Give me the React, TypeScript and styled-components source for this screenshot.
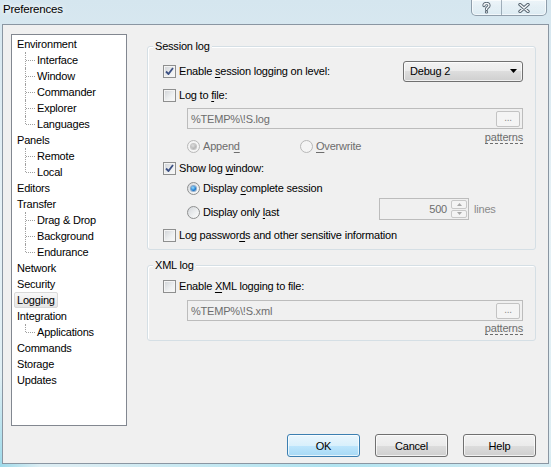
import React from 'react';
import styled, {createGlobalStyle, css} from 'styled-components';

const uiFont = "'Liberation Sans', Arial, sans-serif";

const GlobalStyle = createGlobalStyle`
  html, body {
    margin: 0;
    padding: 0;
  }
  body {
    width: 551px;
    height: 467px;
    overflow: hidden;
    font-family: ${uiFont};
    font-size: 11px;
    letter-spacing: -0.2px;
    color: #000;
  }
  u {
    text-decoration-thickness: 1px;
    text-underline-offset: 2px;
  }
`;

const Window = styled.div`
  width: 551px;
  height: 467px;
  display: flex;
  flex-direction: column;
  background:
    radial-gradient(ellipse 40px 90px at 0% 100%, #9edaea 0%, rgba(158, 218, 234, 0) 100%),
    radial-gradient(ellipse 260px 30px at 60% 100%, rgba(170, 226, 240, 0.9) 0%, rgba(170, 226, 240, 0) 100%),
    linear-gradient(180deg, #d5e6ef 0%, #e6f1f6 45%, #dcedf3 100%);
`;

const TitleBar = styled.div`
  height: 24px;
  flex: 0 0 24px;
  display: flex;
  justify-content: space-between;
  align-items: flex-start;
  padding-left: 3px;
  box-sizing: border-box;
`;

const Title = styled.div`
  line-height: 19px;
  font-size: 11.5px;
  text-shadow: 0 0 5px #fff, 0 0 8px #fff;
`;

const CaptionButtons = styled.div`
  display: flex;
  margin-right: 4px;
  height: 15px;
  border: 1px solid rgba(70, 90, 110, 0.55);
  border-top: none;
  border-radius: 0 0 5px 5px;
  overflow: hidden;
  background: linear-gradient(180deg, rgba(255, 255, 255, 0.55), rgba(225, 238, 245, 0.6));
  box-shadow: inset 0 0 0 1px rgba(255, 255, 255, 0.6);
`;

const CaptionButton = styled.div<{$width: number}>`
  width: ${(p) => p.$width}px;
  display: flex;
  align-items: center;
  justify-content: center;
  & + & {
    border-left: 1px solid rgba(70, 90, 110, 0.45);
  }
`;

const Panel = styled.div`
  margin-left: 2px;
  width: 547px;
  height: 440px;
  box-sizing: border-box;
  border: 1px solid #8a96a2;
  background: #f0f0f0;
  padding: 9px 12px 6px 8px;
  display: flex;
  flex-direction: column;
`;

const Body = styled.div`
  display: flex;
  height: 392px;
`;

const Tree = styled.div`
  width: 116px;
  height: 392px;
  box-sizing: border-box;
  border: 1px solid #828790;
  background: #fff;
  padding-top: 1px;
`;

const TreeRow = styled.div<{$child?: boolean; $last?: boolean}>`
  position: relative;
  height: 16px;
  display: flex;
  align-items: center;
  padding-left: ${(p) => (p.$child ? 20 : 0)}px;
  ${(p) =>
    p.$child &&
    css`
      &::before {
        content: '';
        position: absolute;
        left: 13px;
        top: 0;
        height: ${p.$last ? 8 : 16}px;
        border-left: 1px dotted #a0a0a0;
      }
      &::after {
        content: '';
        position: absolute;
        left: 14px;
        top: 8px;
        width: 9px;
        border-top: 1px dotted #a0a0a0;
      }
    `}
`;

const TreeLabel = styled.span<{$selected?: boolean}>`
  margin-left: 2px;
  padding: 0 2px;
  height: 16px;
  line-height: 14px;
  box-sizing: border-box;
  border: 1px solid transparent;
  border-radius: 2px;
  white-space: nowrap;
  ${(p) =>
    p.$selected &&
    css`
      background: linear-gradient(180deg, #f8f8f8, #e5e5e5);
      border-color: #d9d9d9;
    `}
`;

const Pages = styled.div`
  margin-left: 20px;
  width: 389px;
  display: flex;
  flex-direction: column;
`;

const Group = styled.div<{$mt: number; $pb: number}>`
  position: relative;
  margin-top: ${(p) => p.$mt}px;
  padding: 0 12px ${(p) => p.$pb}px 15px;
  border: 1px solid #d5dfe5;
  border-radius: 3px;
  box-shadow: inset 1px 1px 0 #fff;
  display: flex;
  flex-direction: column;
`;

const Legend = styled.div`
  position: absolute;
  top: -7px;
  left: 5px;
  padding: 0 2px;
  line-height: 13px;
  background: #f0f0f0;
`;

const Row = styled.div<{$mt: number; $h: number; $indent?: number; $end?: boolean}>`
  display: flex;
  align-items: center;
  height: ${(p) => p.$h}px;
  margin-top: ${(p) => p.$mt}px;
  padding-left: ${(p) => p.$indent ?? 0}px;
  justify-content: ${(p) => (p.$end ? 'flex-end' : 'flex-start')};
`;

const Label = styled.span<{$disabled?: boolean}>`
  margin-left: 3px;
  line-height: 14px;
  white-space: nowrap;
  color: ${(p) => (p.$disabled ? '#6d6d6d' : '#000')};
`;

const CheckBox = styled.span`
  width: 13px;
  height: 13px;
  flex: 0 0 13px;
  box-sizing: border-box;
  border: 1px solid #8e8f8f;
  background: linear-gradient(135deg, #cfd2d6 0%, #eef0f1 60%, #f8f8f8 100%);
  box-shadow: inset 0 0 0 1px #f4f4f4;
  display: flex;
  align-items: center;
  justify-content: center;
`;

const RadioCircle = styled.span<{$disabled?: boolean}>`
  width: 13px;
  height: 13px;
  flex: 0 0 13px;
  box-sizing: border-box;
  border-radius: 50%;
  border: 1px solid ${(p) => (p.$disabled ? '#b8b8b8' : '#8e8f8f')};
  background: ${(p) =>
    p.$disabled ? '#f4f4f4' : 'linear-gradient(135deg, #d3d6da 0%, #eef0f1 60%, #fbfbfb 100%)'};
  display: flex;
  align-items: center;
  justify-content: center;
`;

const RadioDot = styled.span<{$disabled?: boolean}>`
  width: 5px;
  height: 5px;
  border-radius: 50%;
  background: ${(p) =>
    p.$disabled
      ? 'radial-gradient(circle at 40% 35%, #e0e0e0 0%, #9a9a9a 100%)'
      : 'radial-gradient(circle at 40% 35%, #9ee0ff 0%, #1a7ad0 60%, #0c4f94 100%)'};
  box-shadow: 0 0 0 1px ${(p) => (p.$disabled ? 'rgba(150,150,150,0.5)' : 'rgba(30,90,160,0.45)')};
`;

const RadioItem = styled.span<{$width?: number; $bottom?: boolean}>`
  display: flex;
  align-items: center;
  height: 16px;
  ${(p) => p.$width && `width: ${p.$width}px; flex: 0 0 ${p.$width}px;`}
  ${(p) => p.$bottom && 'align-self: flex-end;'}
`;

const ComboBox = styled.div`
  margin-left: auto;
  width: 120px;
  height: 21px;
  box-sizing: border-box;
  border: 1px solid #707070;
  border-radius: 3px;
  background: linear-gradient(180deg, #f2f2f2 0%, #ebebeb 50%, #dddddd 50%, #cfcfcf 100%);
  box-shadow: inset 0 0 0 1px rgba(255, 255, 255, 0.7);
  display: flex;
  align-items: center;
  justify-content: space-between;
  padding: 0 5px 0 6px;
`;

const Edit = styled.div<{$mt: number}>`
  margin-top: ${(p) => p.$mt}px;
  margin-left: 24px;
  height: 21px;
  box-sizing: border-box;
  border: 1px solid #bcbcbc;
  background: #f0f0f0;
  display: flex;
  align-items: center;
  padding: 0 2px 0 3px;
  color: #6d6d6d;
`;

const EditText = styled.span`
  flex: 1;
  line-height: 14px;
`;

const BrowseButton = styled.span`
  width: 24px;
  height: 16px;
  box-sizing: border-box;
  border: 1px solid #c3c3c3;
  border-radius: 2px;
  background: #f4f4f4;
  color: #8a8a8a;
  line-height: 12px;
  text-align: center;
  font-size: 10px;
`;

const Patterns = styled.span`
  line-height: 12px;
  color: #6d6d6d;
  border-bottom: 1px dashed #6d6d6d;
`;

const SpinEdit = styled.div`
  width: 90px;
  height: 22px;
  box-sizing: border-box;
  border: 1px solid #bcbcbc;
  background: #f0f0f0;
  display: flex;
  align-items: stretch;
  color: #6d6d6d;
`;

const SpinText = styled.span`
  flex: 1;
  text-align: right;
  padding-right: 4px;
  line-height: 20px;
`;

const SpinButtons = styled.span`
  width: 16px;
  margin: 1px 1px 1px 0;
  display: flex;
  flex-direction: column;
  gap: 1px;
`;

const SpinButton = styled.span`
  flex: 1;
  border: 1px solid #c8c8c8;
  border-radius: 2px;
  background: #f4f4f4;
  display: flex;
  align-items: center;
  justify-content: center;
`;

const Hint = styled.span`
  margin-left: 5px;
  color: #8a8a8a;
`;

const ButtonRow = styled.div`
  display: flex;
  justify-content: flex-end;
  gap: 15px;
  margin-top: 8px;
`;

const Button = styled.button<{$default?: boolean}>`
  width: 73px;
  height: 23px;
  padding: 0;
  font-family: ${uiFont};
  font-size: 11px;
  letter-spacing: -0.2px;
  color: #000;
  border-radius: 3px;
  border: 1px solid ${(p) => (p.$default ? '#3c7fb1' : '#707070')};
  background: ${(p) =>
    p.$default
      ? 'linear-gradient(180deg, #eaf6fd 0%, #d9f0fc 50%, #bee6fd 50%, #a7d9f5 100%)'
      : 'linear-gradient(180deg, #f2f2f2 0%, #ebebeb 50%, #dddddd 50%, #cfcfcf 100%)'};
  box-shadow: inset 0 0 0 1px rgba(255, 255, 255, 0.7);
`;

const CheckMark = () => (
  <svg width="9" height="9" viewBox="0 0 9 9">
    <path d="M1 4.5 L3.5 7 L8 1" fill="none" stroke="#3d5184" strokeWidth="1.8" strokeLinejoin="round" />
  </svg>
);

const Check = ({checked}: {checked?: boolean}) => <CheckBox>{checked && <CheckMark />}</CheckBox>;

const Radio = ({checked, disabled}: {checked?: boolean; disabled?: boolean}) => (
  <RadioCircle $disabled={disabled}>{checked && <RadioDot $disabled={disabled} />}</RadioCircle>
);

const HelpGlyph = () => (
  <svg width="9" height="12" viewBox="0 0 9 12">
    <g fill="none" strokeLinecap="round">
      <path d="M2 3.6 C2 0.8 7 0.8 7 3.4 C7 5.4 4.5 5.2 4.5 7.4" stroke="#55636f" strokeWidth="3.2" />
      <path d="M2 3.6 C2 0.8 7 0.8 7 3.4 C7 5.4 4.5 5.2 4.5 7.4" stroke="#f4f7f9" strokeWidth="1.4" />
    </g>
    <circle cx="4.5" cy="10" r="1.6" fill="#55636f" />
    <circle cx="4.5" cy="10" r="0.7" fill="#f4f7f9" />
  </svg>
);

const CloseGlyph = () => (
  <svg width="12" height="10" viewBox="0 0 12 10">
    <path d="M2 1.5 L10 8.5 M10 1.5 L2 8.5" stroke="#55636f" strokeWidth="3.4" strokeLinecap="round" />
    <path d="M2 1.5 L10 8.5 M10 1.5 L2 8.5" stroke="#f4f7f9" strokeWidth="1.5" strokeLinecap="round" />
  </svg>
);

const ComboArrow = () => (
  <svg width="7" height="4" viewBox="0 0 7 4">
    <path d="M0 0 H7 L3.5 4 Z" fill="#000" />
  </svg>
);

const SpinArrow = ({up}: {up?: boolean}) => (
  <svg width="5" height="3" viewBox="0 0 5 3">
    <path d={up ? 'M0 3 H5 L2.5 0 Z' : 'M0 0 H5 L2.5 3 Z'} fill="#a8a8a8" />
  </svg>
);

interface TreeNode {
  label: string;
  selected?: boolean;
  children?: string[];
}

const tree: TreeNode[] = [
  {label: 'Environment', children: ['Interface', 'Window', 'Commander', 'Explorer', 'Languages']},
  {label: 'Panels', children: ['Remote', 'Local']},
  {label: 'Editors'},
  {label: 'Transfer', children: ['Drag & Drop', 'Background', 'Endurance']},
  {label: 'Network'},
  {label: 'Security'},
  {label: 'Logging', selected: true},
  {label: 'Integration', children: ['Applications']},
  {label: 'Commands'},
  {label: 'Storage'},
  {label: 'Updates'},
];

const PageTree = () => (
  <Tree>
    {tree.map((node) => (
      <React.Fragment key={node.label}>
        <TreeRow>
          <TreeLabel $selected={node.selected}>{node.label}</TreeLabel>
        </TreeRow>
        {node.children?.map((child, i) => (
          <TreeRow key={child} $child $last={i === node.children!.length - 1}>
            <TreeLabel>{child}</TreeLabel>
          </TreeRow>
        ))}
      </React.Fragment>
    ))}
  </Tree>
);

const FileEdit = ({value, mt}: {value: string; mt: number}) => (
  <Edit $mt={mt}>
    <EditText>{value}</EditText>
    <BrowseButton>...</BrowseButton>
  </Edit>
);

export default function App() {
  return (
    <Window>
      <GlobalStyle />
      <TitleBar>
        <Title>Preferences</Title>
        <CaptionButtons>
          <CaptionButton $width={29}>
            <HelpGlyph />
          </CaptionButton>
          <CaptionButton $width={44}>
            <CloseGlyph />
          </CaptionButton>
        </CaptionButtons>
      </TitleBar>

      <Panel>
        <Body>
          <PageTree />
          <Pages>
            <Group $mt={12} $pb={6}>
              <Legend>Session log</Legend>
              <Row $mt={14} $h={20}>
                <Check checked />
                <Label>
                  Enable <u>s</u>ession logging on level:
                </Label>
                <ComboBox>
                  <span>Debug 2</span>
                  <ComboArrow />
                </ComboBox>
              </Row>
              <Row $mt={6} $h={16}>
                <Check />
                <Label>
                  Log to <u>f</u>ile:
                </Label>
              </Row>
              <FileEdit value="%TEMP%\!S.log" mt={5} />
              <Row $mt={2} $h={13} $end>
                <Patterns>patterns</Patterns>
              </Row>
              <Row $mt={-6} $h={16} $indent={24}>
                <RadioItem $width={113}>
                  <Radio checked disabled />
                  <Label $disabled>
                    Appen<u>d</u>
                  </Label>
                </RadioItem>
                <RadioItem>
                  <Radio disabled />
                  <Label $disabled>
                    <u>O</u>verwrite
                  </Label>
                </RadioItem>
              </Row>
              <Row $mt={6} $h={16}>
                <Check checked />
                <Label>
                  Show log <u>w</u>indow:
                </Label>
              </Row>
              <Row $mt={4} $h={16} $indent={24}>
                <Radio checked />
                <Label>
                  Display <u>c</u>omplete session
                </Label>
              </Row>
              <Row $mt={2} $h={22} $indent={24}>
                <RadioItem $width={192} $bottom>
                  <Radio />
                  <Label>
                    Display only <u>l</u>ast
                  </Label>
                </RadioItem>
                <SpinEdit>
                  <SpinText>500</SpinText>
                  <SpinButtons>
                    <SpinButton>
                      <SpinArrow up />
                    </SpinButton>
                    <SpinButton>
                      <SpinArrow />
                    </SpinButton>
                  </SpinButtons>
                </SpinEdit>
                <Hint>lines</Hint>
              </Row>
              <Row $mt={7} $h={16}>
                <Check />
                <Label>
                  Log passwor<u>d</u>s and other sensitive information
                </Label>
              </Row>
            </Group>

            <Group $mt={15} $pb={5}>
              <Legend>XML log</Legend>
              <Row $mt={12} $h={16}>
                <Check />
                <Label>
                  Enable <u>X</u>ML logging to file:
                </Label>
              </Row>
              <FileEdit value="%TEMP%\!S.xml" mt={6} />
              <Row $mt={1} $h={13} $end>
                <Patterns>patterns</Patterns>
              </Row>
            </Group>
          </Pages>
        </Body>

        <ButtonRow>
          <Button $default>OK</Button>
          <Button>Cancel</Button>
          <Button>Help</Button>
        </ButtonRow>
      </Panel>
    </Window>
  );
}
